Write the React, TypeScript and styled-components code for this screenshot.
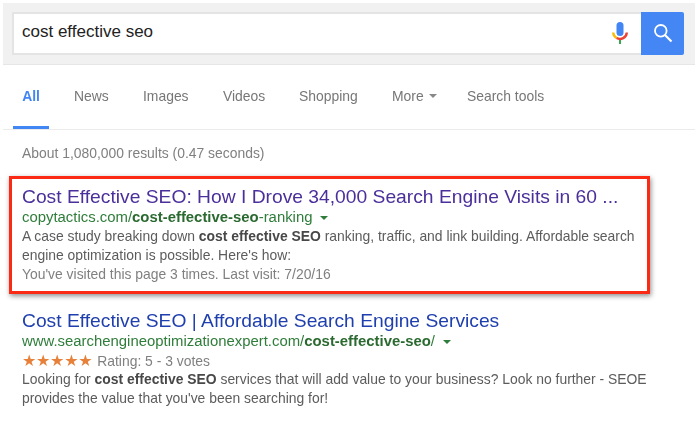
import styled, { createGlobalStyle } from 'styled-components';

const GlobalStyle = createGlobalStyle`
  html, body {
    margin: 0;
    padding: 0;
    background: #fff;
    font-family: "Liberation Sans", Arial, sans-serif;
  }
`;

const Page = styled.div`
  width: 700px;
  height: 421px;
  overflow: hidden;
  padding-top: 3px;
  box-sizing: border-box;
  filter: blur(0.5px);
`;

const SearchBand = styled.div`
  display: flex;
  align-items: center;
  height: 62px;
  width: 692px;
  margin-left: 3px;
  padding: 0 11px 1px 9px;
  box-sizing: border-box;
  background: #f1f1f1;
  border-bottom: 1px solid #e6e6e6;
`;

const SearchBox = styled.div`
  flex: 1;
  display: flex;
  align-items: center;
  justify-content: space-between;
  height: 43px;
  padding: 0 13px 0 8px;
  box-sizing: border-box;
  background: #fff;
  border: 1px solid #e4e4e4;
  border-width: 2px 0 2px 2px;
`;

const SearchText = styled.span`
  padding-bottom: 2px;
  font-size: 17px;
  color: #222;
`;

const SearchButton = styled.div`
  display: flex;
  align-items: center;
  justify-content: center;
  width: 43px;
  height: 43px;
  background: #4486f4;
  border-radius: 0 2px 2px 0;
`;

const Tabs = styled.div`
  display: flex;
  align-items: flex-start;
  width: 692px;
  height: 65px;
  margin-left: 3px;
  box-sizing: border-box;
  padding-left: 10px;
  border-bottom: 1px solid #ebebeb;
`;

const Tab = styled.div<{ $width: number }>`
  display: flex;
  align-items: center;
  gap: 5px;
  width: ${p => p.$width}px;
  height: 64px;
  padding-bottom: 3px;
  box-sizing: border-box;
  font-size: 13.9px;
  color: #777;
`;

const ActiveTab = styled(Tab)`
  justify-content: center;
  margin-right: 25px;
  font-weight: 700;
  color: #4285f4;
  box-shadow: inset 0 -3px 0 #4285f4;
`;

const Caret = styled.span<{ $color: string }>`
  display: inline-block;
  width: 0;
  height: 0;
  border-left: 4px solid transparent;
  border-right: 4px solid transparent;
  border-top: 4px solid ${p => p.$color};
`;

const Stats = styled.div`
  padding: 15px 0 0 22px;
  height: 31px;
  font-size: 13.9px;
  line-height: 16px;
  color: #808080;
`;

const Highlight = styled.div`
  position: relative;
  width: 641px;
  height: 118px;
  margin-left: 9px;
  padding: 6px 0 0 10px;
  box-sizing: border-box;
  border: 3px solid #fb2a14;
  box-shadow: 1px 2px 5px rgba(0, 0, 0, 0.45);
`;

const PlainResult = styled.div`
  padding: 15px 0 0 22px;
`;

const Title = styled.div<{ $visited?: boolean }>`
  font-size: 19.25px;
  line-height: 23px;
  color: ${p => (p.$visited ? '#4b2f9b' : '#1f3fae')};
  white-space: nowrap;
`;

const UrlLine = styled.div`
  display: flex;
  align-items: center;
  gap: 8px;
  font-size: 14.9px;
  line-height: 19px;
  color: #2f7d3a;
  white-space: nowrap;

  b {
    color: #2a6a30;
  }
`;

const Snippet = styled.div`
  font-size: 13.9px;
  line-height: 19px;
  color: #5c5c5c;
  white-space: nowrap;

  b {
    color: #484848;
  }
`;

const Visited = styled.div`
  font-size: 13.9px;
  line-height: 19px;
  color: #808080;
  white-space: nowrap;
`;

const RatingLine = styled.div`
  display: flex;
  align-items: center;
  gap: 5px;
  height: 19px;
  font-size: 13.9px;
  color: #808080;
`;

const Stars = styled.span`
  font-family: "DejaVu Sans", sans-serif;
  font-size: 16px;
  letter-spacing: -0.3px;
  line-height: 19px;
  color: #e7813a;
`;

function MicIcon() {
  return (
    <svg width="16" height="22" viewBox="0 0 16 22" aria-hidden="true">
      <rect x="4.5" y="0" width="7" height="14" rx="3.5" fill="#4285f4" />
      <path d="M1.2 10.5 A6.8 6.8 0 0 0 4.6 16" fill="none" stroke="#fbbc05" strokeWidth="2.4" />
      <path d="M4.6 16 A6.8 6.8 0 0 0 14.8 10.5" fill="none" stroke="#ea4335" strokeWidth="2.4" />
      <rect x="7" y="18" width="2" height="4" fill="#34a853" />
    </svg>
  );
}

function SearchIcon() {
  return (
    <svg width="20" height="20" viewBox="0 0 20 20" aria-hidden="true">
      <circle cx="7.8" cy="7.8" r="5.8" fill="none" stroke="#fff" strokeWidth="1.8" />
      <path d="M12 12 L18.5 18.5" stroke="#fff" strokeWidth="2.2" />
    </svg>
  );
}

export default function App() {
  return (
    <>
      <GlobalStyle />
      <Page>
        <SearchBand>
          <SearchBox>
            <SearchText>cost effective seo</SearchText>
            <MicIcon />
          </SearchBox>
          <SearchButton>
            <SearchIcon />
          </SearchButton>
        </SearchBand>

        <Tabs>
          <ActiveTab $width={36}>All</ActiveTab>
          <Tab $width={69}>News</Tab>
          <Tab $width={80}>Images</Tab>
          <Tab $width={76}>Videos</Tab>
          <Tab $width={93}>Shopping</Tab>
          <Tab $width={75}>More <Caret $color="#888" /></Tab>
          <Tab $width={90}>Search tools</Tab>
        </Tabs>

        <Stats>About 1,080,000 results (0.47 seconds)</Stats>

        <Highlight>
          <Title $visited>Cost Effective SEO: How I Drove 34,000 Search Engine Visits in 60 ...</Title>
          <UrlLine>
            <span>copytactics.com/<b>cost-effective-seo</b>-ranking</span>
            <Caret $color="#2f7d3a" />
          </UrlLine>
          <Snippet>
            A case study breaking down <b>cost effective SEO</b> ranking, traffic, and link building. Affordable search
            <br />
            engine optimization is possible. Here's how:
          </Snippet>
          <Visited>You've visited this page 3 times. Last visit: 7/20/16</Visited>
        </Highlight>

        <PlainResult>
          <Title>Cost Effective SEO | Affordable Search Engine Services</Title>
          <UrlLine>
            <span>www.searchengineoptimizationexpert.com/<b>cost-effective-seo</b>/</span>
            <Caret $color="#2f7d3a" />
          </UrlLine>
          <RatingLine>
            <Stars>★★★★★</Stars>
            Rating: 5 - 3 votes
          </RatingLine>
          <Snippet>
            Looking for <b>cost effective SEO</b> services that will add value to your business? Look no further - SEOE
            <br />
            provides the value that you've been searching for!
          </Snippet>
        </PlainResult>
      </Page>
    </>
  );
}
